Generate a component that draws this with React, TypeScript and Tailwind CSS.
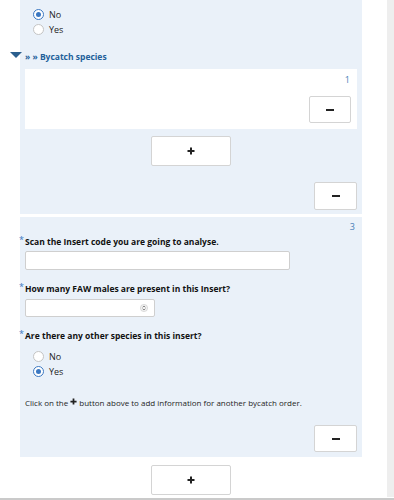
import React from 'react';

const font = { fontFamily: '"Open Sans", "Noto Sans", sans-serif' };

function Radio({ label, checked }: { label: string; checked?: boolean }) {
  return (
    <div className="flex h-[15px] items-center pl-[8px]">
      {checked ? (
        <span className="flex h-[11px] w-[11px] items-center justify-center rounded-full border-[1.5px] border-[#3b78c2] bg-white">
          <span className="h-[5px] w-[5px] rounded-full bg-[#3b78c2]" />
        </span>
      ) : (
        <span className="h-[11px] w-[11px] rounded-full border border-[#c4c4c4] bg-white" />
      )}
      <span className="ml-[5px] text-[9px] text-[#1e1e1e]">{label}</span>
    </div>
  );
}

function Label({ children }: { children: React.ReactNode }) {
  return (
    <div className="flex h-[12px] items-center -ml-[6px]">
      <span className="w-[6px] self-start text-[9px] leading-[8px] text-[#3b78c2]">*</span>
      <span className="text-[8.5px] font-bold text-[#111]">{children}</span>
    </div>
  );
}

function MinusButton({ className }: { className: string }) {
  return (
    <button className={`flex items-center justify-center rounded-[2px] border border-[#d4d4d4] bg-white ${className}`}>
      <span className="h-[2px] w-[8px] bg-[#222]" />
    </button>
  );
}

function PlusButton({ className }: { className: string }) {
  return (
    <button className={`flex items-center justify-center rounded-[2px] border border-[#d4d4d4] bg-white ${className}`}>
      <svg width="8" height="8" viewBox="0 0 8 8">
        <path d="M4 0.5v7M0.5 4h7" stroke="#222" strokeWidth="2" />
      </svg>
    </button>
  );
}

export default function App() {
  return (
    <div className="flex h-[500px] w-[394px] flex-col overflow-hidden bg-white" style={font}>
      <div className="flex h-[497px]">
        <div className="flex w-[387px] flex-col overflow-hidden">
          {/* bycatch block */}
          <div className="ml-[20px] flex w-[342px] flex-col bg-[#eaf1f9] px-[5px] pb-[4px] pt-[7px]">
            <Radio label="No" checked />
            <Radio label="Yes" />

            <div className="-ml-[15px] mt-[13px] flex h-[14px] items-center">
              <svg width="12" height="6" viewBox="0 0 12 6" className="-mt-[4px]">
                <polygon points="0,0 12,0 6,6" fill="#2b5f8e" />
              </svg>
              <span className="ml-[3px] text-[8.5px] font-bold text-[#22609a]">» » Bycatch species</span>
            </div>

            <div className="mt-[5px] flex h-[60px] flex-col bg-white p-[6px]">
              <div className="pr-[1px] text-right text-[9px] leading-[10px] text-[#4a80b8]">1</div>
              <MinusButton className="mt-auto h-[27px] w-[42px] self-end" />
            </div>

            <PlusButton className="mx-auto mt-[7px] h-[30px] w-[80px]" />
            <MinusButton className="mt-[16px] h-[28px] w-[43px] self-end" />
          </div>

          {/* insert block */}
          <div className="ml-[20px] mt-[3px] flex w-[342px] flex-col bg-[#eaf1f9] px-[5px] pb-[5px] pt-[4px]">
            <div className="h-[12px] pr-[2px] text-right text-[9px] leading-[12px] text-[#4a80b8]">3</div>

            <div className="mt-[3px]">
              <Label>Scan the Insert code you are going to analyse.</Label>
            </div>
            <div className="mt-[3px] h-[19px] w-[265px] rounded-[2px] border border-[#cfcfcf] bg-white" />

            <div className="mt-[13px]">
              <Label>How many FAW males are present in this Insert?</Label>
            </div>
            <div className="mt-[4px] flex h-[18px] w-[130px] items-center justify-end rounded-[2px] border border-[#cfcfcf] bg-white pr-[6px]">
              <svg width="8" height="8" viewBox="0 0 8 8">
                <circle cx="4" cy="4" r="3.6" fill="#f2f2f2" stroke="#c8c8c8" strokeWidth="0.6" />
                <path d="M2.6 3.3L4 2l1.4 1.3M2.6 4.7L4 6l1.4-1.3" fill="none" stroke="#555" strokeWidth="0.7" />
              </svg>
            </div>

            <div className="mt-[13px]">
              <Label>Are there any other species in this insert?</Label>
            </div>
            <div className="mt-[7px]">
              <Radio label="No" />
              <Radio label="Yes" checked />
            </div>

            <div className="mt-[18px] flex h-[12px] items-center text-[8px] text-[#1e1e1e]">
              Click on the
              <svg width="7" height="7" viewBox="0 0 8 8" className="mx-[2px] -mt-[3px]">
                <path d="M4 0.5v7M0.5 4h7" stroke="#222" strokeWidth="2" />
              </svg>
              button above to add information for another bycatch order.
            </div>

            <MinusButton className="mt-[16px] h-[27px] w-[43px] self-end" />
          </div>

          <div className="ml-[20px] flex w-[342px] justify-center">
            <PlusButton className="mt-[8px] h-[30px] w-[80px]" />
          </div>
        </div>
        <div className="w-[7px] bg-[#eeeeee]" />
      </div>
      <div className="mt-[1px] h-[2px] bg-[#cacaca]" />
    </div>
  );
}
